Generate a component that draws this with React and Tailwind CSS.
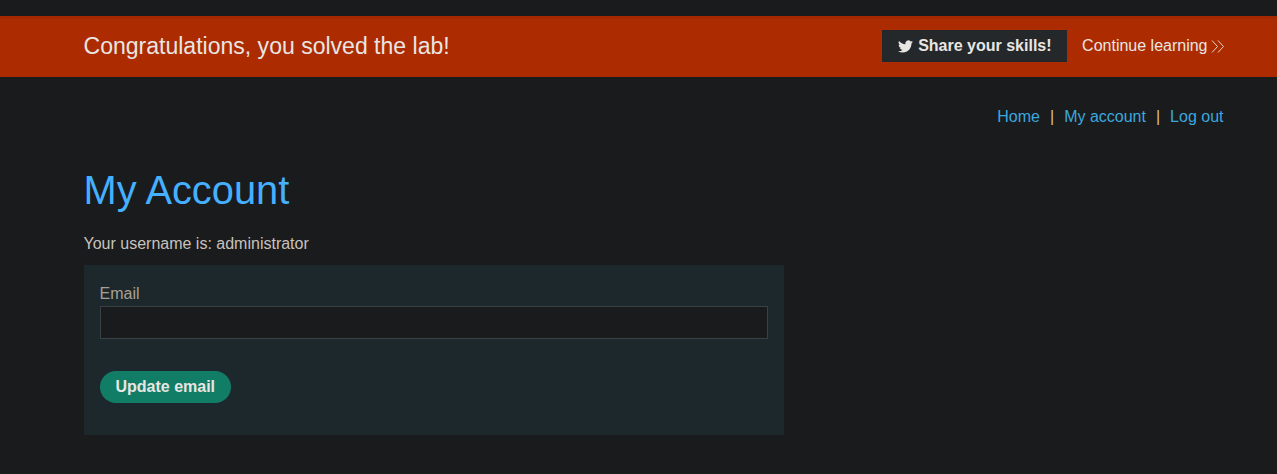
import React from 'react';

function Banner() {
  return (
    <section className="mt-4 flex h-[61px] items-center justify-between bg-[#ac2b00] pr-[52px] pb-[2px] pl-[83.5px] text-[#e8e6e3] shadow-[inset_0_3px_0_#a42900]">
      <h4 className="text-[23.04px] leading-7">Congratulations, you solved the lab!</h4>
      <div className="flex items-center">
        <button className="flex h-8 w-[185px] items-center bg-[#25282a] pl-4 font-bold whitespace-nowrap">
          <svg className="mt-px mr-[5.1px] h-[15px] w-[15px] shrink-0" viewBox="0 0 24 24" fill="currentColor">
            <path d="M23.953 4.57a10 10 0 01-2.825.775 4.958 4.958 0 002.163-2.723c-.951.555-2.005.959-3.127 1.184a4.92 4.92 0 00-8.384 4.482C7.69 8.095 4.067 6.13 1.64 3.162a4.822 4.822 0 00-.666 2.475c0 1.71.87 3.213 2.188 4.096a4.904 4.904 0 01-2.228-.616v.06a4.923 4.923 0 003.946 4.827 4.996 4.996 0 01-2.212.085 4.936 4.936 0 004.604 3.417 9.867 9.867 0 01-6.102 2.105c-.39 0-.779-.023-1.17-.067a13.995 13.995 0 007.557 2.209c9.053 0 13.998-7.496 13.998-13.985 0-.21 0-.42-.015-.63A9.935 9.935 0 0024 4.59z" />
          </svg>
          Share your skills!
        </button>
        <a className="ml-[15px] flex items-center whitespace-nowrap">
          Continue learning
          <svg className="ml-[3.5px] h-[14px] w-[14px]" viewBox="0 0 14 14" fill="none" stroke="currentColor" strokeWidth="0.9">
            <path d="M1 1.5 6.5 7.5 1 13.5M7 1.5l5.5 6L7 13.5" />
          </svg>
        </a>
      </div>
    </section>
  );
}

export default function App() {
  return (
    <div className="flow-root h-[474px] overflow-hidden bg-[#1a1b1d] font-['Liberation_Sans',Arial,sans-serif] text-base leading-6 text-[#c8c3bc]">
      <Banner />
      <main className="pl-[83.5px]">
        <nav className="mt-7 flex justify-end gap-2.5 pr-[53.5px] text-[#3ba8df]">
          <a>Home</a>
          <span className="text-[#d8c090]">|</span>
          <a>My account</a>
          <span className="text-[#d8c090]">|</span>
          <a>Log out</a>
        </nav>
        <h1 className="mt-[35px] text-[39.81px] leading-[52px] text-[#44b0ff]">My Account</h1>
        <p className="mt-4">Your username is: administrator</p>
        <form className="mt-[9px] h-[170px] w-[700px] bg-[#1d282c] px-4 pt-4">
          <label className="block h-[25px] leading-[25px] text-[#a8a095]">Email</label>
          <input className="block h-[33px] w-full border border-[#3a4145] bg-[#1a1b1d] px-2 outline-none" />
          <button type="button" className="mt-8 block h-8 w-[131px] rounded-full bg-[#127d66] pl-[0.5px] text-center font-bold text-[#e8e6e3]">
            Update email
          </button>
        </form>
      </main>
    </div>
  );
}
